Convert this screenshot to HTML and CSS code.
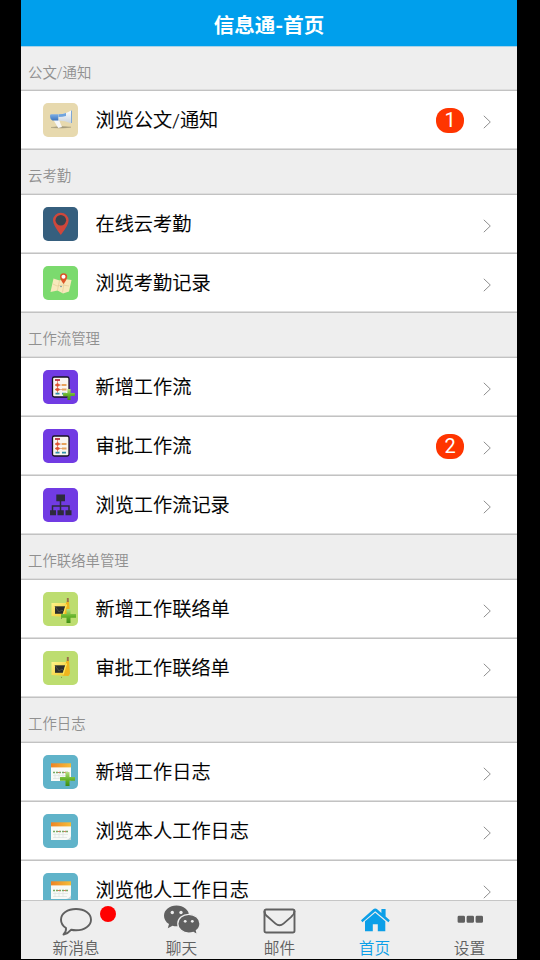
FILE: index.html
```html
<!DOCTYPE html>
<html lang="zh-CN">
<head>
<meta charset="utf-8">
<title>信息通-首页</title>
<link rel="stylesheet" href="styles.css">
</head>
<body>
<svg class="defs" aria-hidden="true">
  <defs>
    <linearGradient id="orange" x1="0" x2="1"><stop offset="0" stop-color="#ee8425"/><stop offset="1" stop-color="#f5bd38"/></linearGradient>
    <linearGradient id="green" x1="0" y1="0" x2="0" y2="1"><stop offset="0" stop-color="#b9df82"/><stop offset=".5" stop-color="#68b52c"/><stop offset="1" stop-color="#3d8c13"/></linearGradient>
    <linearGradient id="horn" x1="0" y1="0" x2="0" y2="1"><stop offset="0" stop-color="#fff"/><stop offset="1" stop-color="#c9d3de"/></linearGradient>
    <linearGradient id="gold" x1="0" y1="0" x2="1" y2="1"><stop offset="0" stop-color="#fff38a"/><stop offset="1" stop-color="#f2c524"/></linearGradient>
    <linearGradient id="blue" x1="0" y1="0" x2="0" y2="1"><stop offset="0" stop-color="#7daee6"/><stop offset="1" stop-color="#3c74bd"/></linearGradient>
  </defs>
  <symbol id="i-chevron" viewBox="0 0 9 14"><path d="M.8 .8 7.300 7 .8 13.200" fill="none" stroke="#8e8e8e" stroke-width="1"/></symbol>
  <symbol id="i-horn" viewBox="0 0 35 34">
    <path d="M8 24.500Q18 22.500 28 24.200Q18 25.800 8 24.500Z" fill="#9d9478" stroke="#b0a684" stroke-width=".6"/>
    <path d="M10.500 17h5.500l3 7-3.800 1z" fill="#f6f7f8"/>
    <path d="M7 12.500q0-1.200 1.500-1.200H15.500v6.200H9.500Q7 16.500 7 12.500z" fill="url(#blue)"/>
    <path d="M15.500 11.300q7-.2 13-4v13.200Q22 17.500 15.500 17.500z" fill="url(#horn)"/>
    <path d="M15.500 11.300q4-.2 7.500-1.400v3q-3.500 1-7.500 1z" fill="#6fa3dd"/>
    <path d="M28.500 7.500v12.500" stroke="#7fa6d2" stroke-width="1"/>
  </symbol>
  <symbol id="i-pin" viewBox="0 0 35 34">
    <path d="M17.800 28Q10 18 10 13.500a7.800 7.800 0 0 1 15.600 0Q25.600 18 17.800 28z" fill="#cf473b"/>
    <circle cx="17.800" cy="13.300" r="5.300" fill="#354451"/>
  </symbol>
  <symbol id="i-map" viewBox="0 0 35 34">
    <path d="M10.500 12.500l6 2 5-1.500 7 1-2.500 11.500-6 2-5.500-3L7.500 26z" fill="#f7e8bb"/>
    <path d="M16.500 14.500 14.500 24M21.500 14l-2 12.500M10 18l4 2 6-1 6 1" fill="none" stroke="#e4cb96" stroke-width=".7"/>
    <path d="M20.500 18Q17 13 17 10.800a3.600 3.600 0 0 1 7.200 0Q24.200 13 20.500 18z" fill="#dc5428"/>
    <circle cx="20.500" cy="10.800" r="2" fill="#fff"/><circle cx="18" cy="20.500" r=".7" fill="#447fa2"/>
  </symbol>
  <symbol id="i-flow" viewBox="0 0 35 34">
    <rect x="9.500" y="7" width="16.500" height="20" rx="1.800" fill="#f8f5ef" stroke="#171325" stroke-width="1.300"/>
    <path d="M14.500 10v14" stroke="#d9826b" stroke-width=".8"/>
    <path d="M12 10h5" stroke="#bd3340" stroke-width="1.800"/>
    <path d="M12 15l2.500-1.500L17 15l-2.500 1.500zM12 19.500l2.500-1.500 2.500 1.500-2.500 1.500z" fill="#df512f" stroke="#df512f" stroke-width=".6"/>
    <path d="M17 15h2M17 19.500h2" stroke="#db9570" stroke-width=".8"/>
    <path d="M19 15h4.500M19 19.500h4.500" stroke="#e6a35c" stroke-width="2"/>
    <path d="M12.500 23.700h4M19 23.700h4" stroke="#328faa" stroke-width="1.700"/>
  </symbol>
  <symbol id="i-tree" viewBox="0 0 35 34">
    <path d="M17.500 12v12M9.500 24v-6h16.500v6" fill="none" stroke="#2d2b3c" stroke-width="1.500"/>
    <path d="M13.300 6.500h8.700v6.800h-8.700zM7 22.300h6v5H7zM14.500 22.300h6.300v5h-6.300zM22.500 22.300h6v5h-6z" fill="#2d2b3c"/>
  </symbol>
  <symbol id="i-board" viewBox="0 0 35 34">
    <path d="M8.500 11H24l1 14-16.500-1z" fill="url(#gold)"/>
    <path d="M12 14.300h11v7.500H12z" fill="#2b2d2c"/><path d="M12 14.300 16 20l3-2 4 4" fill="none" stroke="#54544b" stroke-width=".8"/>
    <path d="M23.500 9.500l2.500-.5 1 13.500-1.500 2.500-6-.5z" fill="#efb51f"/>
    <path d="M23.500 12.500 20 23.500" stroke="#fbe95f" stroke-width="1.300"/>
    <path d="M24.800 6v4" stroke="#996e49" stroke-width="1.900"/><circle cx="18.500" cy="26.300" r=".5" fill="#6b793f"/>
  </symbol>
  <symbol id="i-cal" viewBox="0 0 35 34">
    <path d="M8 11h20v15H8z" fill="#f8faf7"/>
    <path d="M8 8.300h20V12.400H8z" fill="url(#orange)"/>
    <path d="M10 17.500h2m1 0h2m1 0h2m1 0h2m1 0h3" stroke="#78a961" stroke-width="1.300"/>
    <path d="M15 17.500h2m4 0h2" stroke="#d27a63" stroke-width="1"/>
    <path d="M10 20.500h15M10 23.500h14M12 19v5m4-5v5m4-5v5" stroke="#dce3df" stroke-width=".7"/>
    <path d="M28 22v4h-5q4-1 5-4z" fill="#c5d5d7"/>
  </symbol>
  <symbol id="i-plus" viewBox="0 0 15 14"><path d="M5.500 0h4v5H15v3.800H9.500V14h-4V8.800H0V5h5.500z" fill="url(#green)"/></symbol>
</svg>
<div class="phone">
  <header class="title">信息通-首页</header>
  <main class="content">
    <h2 class="group">公文/通知</h2>
    <div class="row"><span class="icon sand"><svg><use href="#i-horn"/></svg></span><span class="label">浏览公文/通知</span><span class="count">1</span><svg class="chevron"><use href="#i-chevron"/></svg></div>
    <h2 class="group">云考勤</h2>
    <div class="row"><span class="icon navy"><svg><use href="#i-pin"/></svg></span><span class="label">在线云考勤</span><svg class="chevron"><use href="#i-chevron"/></svg></div>
    <div class="row"><span class="icon grass"><svg><use href="#i-map"/></svg></span><span class="label">浏览考勤记录</span><svg class="chevron"><use href="#i-chevron"/></svg></div>
    <h2 class="group">工作流管理</h2>
    <div class="row"><span class="icon purple"><svg><use href="#i-flow"/></svg><svg class="plus small"><use href="#i-plus"/></svg></span><span class="label">新增工作流</span><svg class="chevron"><use href="#i-chevron"/></svg></div>
    <div class="row"><span class="icon purple"><svg><use href="#i-flow"/></svg></span><span class="label">审批工作流</span><span class="count">2</span><svg class="chevron"><use href="#i-chevron"/></svg></div>
    <div class="row"><span class="icon purple"><svg><use href="#i-tree"/></svg></span><span class="label">浏览工作流记录</span><svg class="chevron"><use href="#i-chevron"/></svg></div>
    <h2 class="group">工作联络单管理</h2>
    <div class="row"><span class="icon lime"><svg><use href="#i-board"/></svg><svg class="plus"><use href="#i-plus"/></svg></span><span class="label">新增工作联络单</span><svg class="chevron"><use href="#i-chevron"/></svg></div>
    <div class="row"><span class="icon lime"><svg><use href="#i-board"/></svg></span><span class="label">审批工作联络单</span><svg class="chevron"><use href="#i-chevron"/></svg></div>
    <h2 class="group">工作日志</h2>
    <div class="row"><span class="icon teal"><svg><use href="#i-cal"/></svg><svg class="plus cal"><use href="#i-plus"/></svg></span><span class="label">新增工作日志</span><svg class="chevron"><use href="#i-chevron"/></svg></div>
    <div class="row"><span class="icon teal"><svg><use href="#i-cal"/></svg></span><span class="label">浏览本人工作日志</span><svg class="chevron"><use href="#i-chevron"/></svg></div>
    <div class="row"><span class="icon teal"><svg><use href="#i-cal"/></svg></span><span class="label">浏览他人工作日志</span><svg class="chevron"><use href="#i-chevron"/></svg></div>
  </main>
  <nav class="tabs">
    <a class="tab first"><svg viewBox="0 0 40 36"><path d="M20 8C28.500 8 35 12.600 35 18.700S28.500 29.300 20 29.300Q17.300 29.300 15 28.800Q12 32.500 7.500 33.500Q10.500 30.500 10 27Q5 23.700 5 18.700C5 12.600 11.500 8 20 8Z" fill="none" stroke="currentColor" stroke-width="1.900" stroke-linejoin="round"/></svg><span>新消息</span><i class="dot"></i></a>
    <a class="tab second"><svg viewBox="0 0 40 36"><path d="M14.500 4.500c7 0 12.500 4.300 12.500 10.200S21.500 25.300 14.500 25.300q-2 0-4-.5L5.800 27.300l1.200-4.200Q2 19.800 2 14.700C2 8.800 7.500 4.500 14.500 4.500Z" fill="currentColor"/><path d="M26.800 13.300C33 13.300 38 17.500 38 22.700q0 4-3.600 6.800l1 4.200-4-2.200q-2.200.6-4.600.6c-6.200 0-11-4.200-11-9.400s4.800-9.400 11-9.400Z" fill="currentColor" stroke="#eee" stroke-width="1.300"/><g fill="#eee"><circle cx="10.300" cy="11.500" r="1.700"/><circle cx="19" cy="11.500" r="1.700"/><circle cx="23.200" cy="20.300" r="1.400"/><circle cx="30.300" cy="20.300" r="1.400"/></g></svg><span>聊天</span></a>
    <a class="tab"><svg viewBox="0 0 40 36"><rect x="4.500" y="8.500" width="30" height="23" rx="1.800" fill="none" stroke="currentColor" stroke-width="1.900"/><path d="M4.500 10q0 3.500 3 5.600l8 7Q19.500 26 23.500 22.600l8-7q3-2.500 3-5.600" fill="none" stroke="currentColor" stroke-width="1.900"/></svg><span>邮件</span></a>
    <a class="tab active"><svg viewBox="0 0 40 36"><path d="M20.200 7.500q1.200 0 2.300 1l3.900 3.400V8h4.200v7.500l4.200 3.700-1.400 2L20.200 10.300 7.400 21.200 6 19.200 18 8.500q1-1 2.200-1Z" fill="currentColor"/><path d="M20.200 11.800 30.300 20.300V30.300H22.800V23.300H17.800V30.300H10V20.300Z" fill="currentColor"/></svg><span>首页</span></a>
    <a class="tab"><svg viewBox="0 0 40 36"><path d="M9 14.800h4.600q1.400 0 1.400 1.400v4.200q0 1.400-1.400 1.400H9q-1.400 0-1.400-1.400v-4.200q0-1.400 1.400-1.400zm9 0h4.600q1.400 0 1.400 1.400v4.200q0 1.400-1.400 1.400H18q-1.400 0-1.400-1.400v-4.200q0-1.400 1.400-1.400zm9 0h4.600q1.400 0 1.400 1.400v4.200q0 1.400-1.400 1.400H27q-1.400 0-1.400-1.400v-4.200q0-1.400 1.400-1.400z" fill="currentColor"/></svg><span>设置</span></a>
  </nav>
</div>
</body>
</html>
```
FILE: styles.css
```css
* { box-sizing: border-box; }
body {
  margin: 0;
  background: #000;
  font-family: Roboto, "Noto Sans CJK SC", sans-serif;
  font-weight: 350;
}
.defs { position: absolute; width: 0; height: 0; }
.phone {
  display: flex;
  flex-direction: column;
  width: 496px;
  height: 959px;
  margin-left: 21px;
  background: #eee;
  overflow: hidden;
}
.title {
  flex: none;
  height: 46px;
  padding-top: 3px;
  line-height: 46px;
  text-align: center;
  font-size: 20.5px;
  font-weight: 700;
  color: #fff;
  background: #009fec;
  box-shadow: 0 1px 0 #a9d3e8;
}
.content { flex: 1; min-height: 0; overflow: hidden; margin-top: 1px; }
.group, .row { border-bottom: 1px solid #c2c2c2; box-shadow: inset 0 -1px 0 #dedede; }
.group {
  height: 45px;
  margin: 0;
  padding: 6px 7px 0;
  line-height: 42px;
  font-size: 14.4px;
  font-weight: 350;
  color: #909090;
}
.group:first-child { height: 44px; }
.row {
  display: flex;
  align-items: center;
  height: 59px;
  padding: 0 25px 0 22px;
  background: #fff;
}
.icon {
  position: relative;
  flex: none;
  width: 35px;
  height: 34px;
  border-radius: 5px;
}
.icon svg { display: block; width: 35px; height: 34px; }
.icon .plus { position: absolute; left: 18px; top: 17px; width: 15px; height: 14px; }
.icon .plus.small { left: 20px; top: 19px; width: 12px; height: 11px; }
.icon .plus.cal { left: 17px; }
.sand { background: #e7d9ae; }
.navy { background: #365f7e; }
.grass { background: #7bda6e; }
.purple { background: #713be3; }
.lime { background: #bddd70; }
.teal { background: #60b3c9; }
.label {
  flex: 1;
  margin: 2px 0 0 17.5px;
  font-size: 19.2px;
  line-height: 28px;
  color: #000;
  -webkit-text-stroke: .15px currentColor;
}
.count {
  width: 28px;
  height: 25px;
  margin-right: 19px;
  border-radius: 12px;
  line-height: 25px;
  text-align: center;
  font-size: 20px;
  font-weight: 400;
  color: #fff;
  background: #ff3500;
}
.chevron { width: 9px; height: 14px; margin-top: 3px; }
.tabs {
  flex: none;
  display: flex;
  height: 59px;
  border-top: 1px solid #c6c6c6;
  background: #eee;
}
.tab {
  position: relative;
  display: flex;
  flex-direction: column;
  align-items: center;
  width: 95px;
  color: #606060;
  font-size: 15.7px;
  line-height: 23px;
}
.tab svg { flex: none; width: 40px; height: 36px; }
.tab span { flex: none; }
.first { width: 110px; }
.second { width: 101px; }
.active { color: #0b9fe8; }
.dot {
  position: absolute;
  left: 79px;
  top: 5px;
  width: 16px;
  height: 16px;
  border-radius: 50%;
  background: #f00;
}
```
